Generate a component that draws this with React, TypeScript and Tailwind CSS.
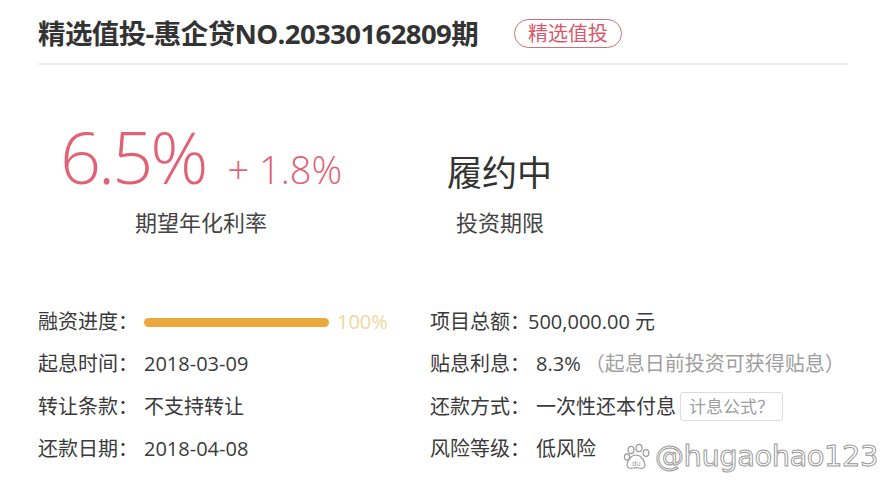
import React from 'react';

const font = { fontFamily: '"Open Sans", "Noto Sans CJK SC", sans-serif' };

const Row = ({ label, children }: { label: string; children: React.ReactNode }) => (
  <div className="flex h-[42.3px] items-center text-[20px] text-[#3a3a3a]">
    <span className="shrink-0">{label}</span>
    {children}
  </div>
);

const Paw = () => (
  <svg width="28" height="28" viewBox="0 0 28 28" fill="white" stroke="#9a9a9a" strokeWidth="1.2">
    <ellipse cx="8" cy="7" rx="3" ry="3.6" />
    <ellipse cx="16" cy="5" rx="3" ry="3.6" />
    <ellipse cx="23" cy="10" rx="2.8" ry="3.4" />
    <ellipse cx="4" cy="14" rx="2.6" ry="3.2" />
    <path d="M13 12c-5 0-9 6-9 10 0 3 3 4 6 3 2-.5 4-.5 6 0 3 1 6 0 6-3 0-4-4-10-9-10z" />
    <text x="9" y="23" fontSize="7" fill="#9a9a9a" stroke="none" fontFamily="Open Sans">du</text>
  </svg>
);

export default function App() {
  return (
    <div className="relative h-[492px] w-[885px] overflow-hidden bg-white" style={font}>
      <div className="px-[38px]">
        <div className="flex h-[65px] items-center border-b-2 border-[#ececec] pt-[4px]">
          <h1 className="text-[27.5px] font-bold tracking-[-0.6px] text-[#333]">
            精选值投-惠企贷NO.20330162809期
          </h1>
          <span className="ml-[36px] rounded-full border border-[#c7727c] px-[13px] text-[20px] leading-[27px] text-[#d65a6c]">
            精选值投
          </span>
        </div>

        <div className="flex pt-[47px]">
          <div className="ml-[22px] flex w-[387px] flex-col">
            <div className="flex items-baseline text-[#e06274]">
              <span className="text-[72px] leading-[88px] font-light tracking-[-3px]">6.5%</span>
              <span className="ml-[22px] text-[38px] font-light">+ 1.8%</span>
            </div>
            <div className="mt-[6px] pl-[75px] text-[22px] text-[#444]">期望年化利率</div>
          </div>
          <div className="flex flex-col">
            <div className="flex h-[88px] items-end pb-[10px] text-[35px] leading-none text-[#333]">履约中</div>
            <div className="mt-[6px] pl-[9px] text-[22px] text-[#444]">投资期限</div>
          </div>
        </div>

        <div className="mt-[62px] grid grid-cols-[392px_1fr]">
          <div className="flex flex-col">
            <Row label="融资进度：">
              <div className="ml-[6px] h-[9px] w-[185px] rounded-full bg-[#e9a93c]" />
              <span className="ml-[8px] text-[#f0d7a0]">100%</span>
            </Row>
            <Row label="起息时间：">
              <span className="ml-[6px]">2018-03-09</span>
            </Row>
            <Row label="转让条款：">
              <span className="ml-[6px]">不支持转让</span>
            </Row>
            <Row label="还款日期：">
              <span className="ml-[6px]">2018-04-08</span>
            </Row>
          </div>
          <div className="flex flex-col">
            <Row label="项目总额：">
              <span className="-ml-[2px]">500,000.00 元</span>
            </Row>
            <Row label="贴息利息：">
              <span className="ml-[6px]">8.3%</span>
              <span className="ml-[4px] text-[#9e9e9e]">（起息日前投资可获得贴息）</span>
            </Row>
            <Row label="还款方式：">
              <span className="ml-[6px]">一次性还本付息</span>
              <span className="ml-[4px] rounded-[3px] border border-[#dcdcdc] px-[8px] text-[17px] leading-[27px] text-[#9e9e9e]">
                计息公式？
              </span>
            </Row>
            <Row label="风险等级：">
              <span className="ml-[6px]">低风险</span>
            </Row>
          </div>
        </div>
      </div>

      <div className="absolute left-[623px] top-[442px] flex items-center gap-[4px]">
        <Paw />
        <span
          className="text-[29px] leading-none tracking-[-0.5px] text-white [-webkit-text-stroke:1px_#9a9a9a]"
          style={{ fontFamily: '"DejaVu Sans", sans-serif' }}
        >
          @hugaohao123
        </span>
      </div>
    </div>
  );
}
